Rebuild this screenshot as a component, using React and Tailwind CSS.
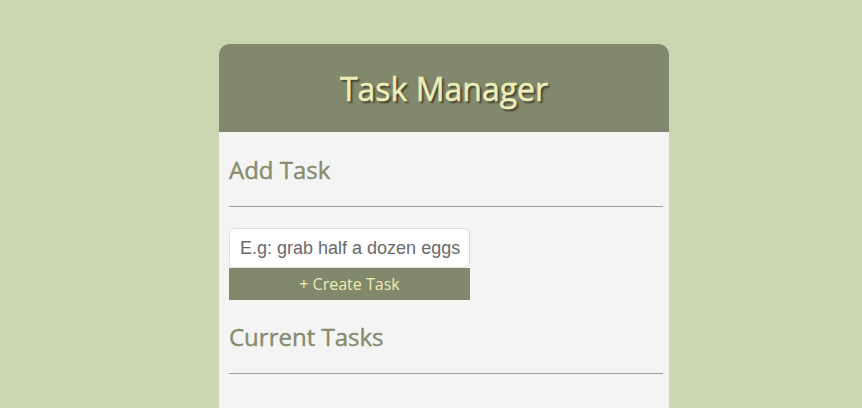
export default function App() {
  return (
    <div className="min-h-[408px] w-full bg-[#c9d8b1] pt-[44px] overflow-hidden" style={{ fontFamily: '"Open Sans", sans-serif' }}>
      <div className="ml-[219px] w-[450px] rounded-t-[10px] bg-[#f4f4f4] h-[364px]">
        <div className="h-[88px] rounded-t-[10px] bg-[#82886b] flex items-center justify-center">
          <h1 className="text-[32px] text-[#efedb7] leading-none [-webkit-text-stroke:0.5px_#efedb7] [text-shadow:2px_2px_2px_#3a3a2a] pt-[2px]">Task Manager</h1>
        </div>
        <div className="pl-[10px] pr-[6px]">
          <h2 className="text-[24px] text-[#868c6c] leading-none [-webkit-text-stroke:0.4px_#868c6c] pt-[26px]">Add Task</h2>
          <div className="mt-[24px] border-t border-[#9c9c9c]"></div>
          <div className="mt-[21px] w-[241px]">
            <div className="h-[40px] rounded-[5px] border border-[#dddddd] bg-white flex items-center pl-[10px] text-[18px] text-[#6a6a6a] whitespace-nowrap" style={{ fontFamily: '"Liberation Sans", Arial, sans-serif' }}>
              E.g: grab half a dozen eggs
            </div>
            <button className="h-[32px] w-full bg-[#82886b] text-[16px] text-[#efedb7] flex items-center justify-center">+ Create Task</button>
          </div>
          <h2 className="text-[24px] text-[#868c6c] leading-none [-webkit-text-stroke:0.4px_#868c6c] pt-[25px]">Current Tasks</h2>
          <div className="mt-[24px] border-t border-[#9c9c9c]"></div>
        </div>
      </div>
    </div>
  );
}
